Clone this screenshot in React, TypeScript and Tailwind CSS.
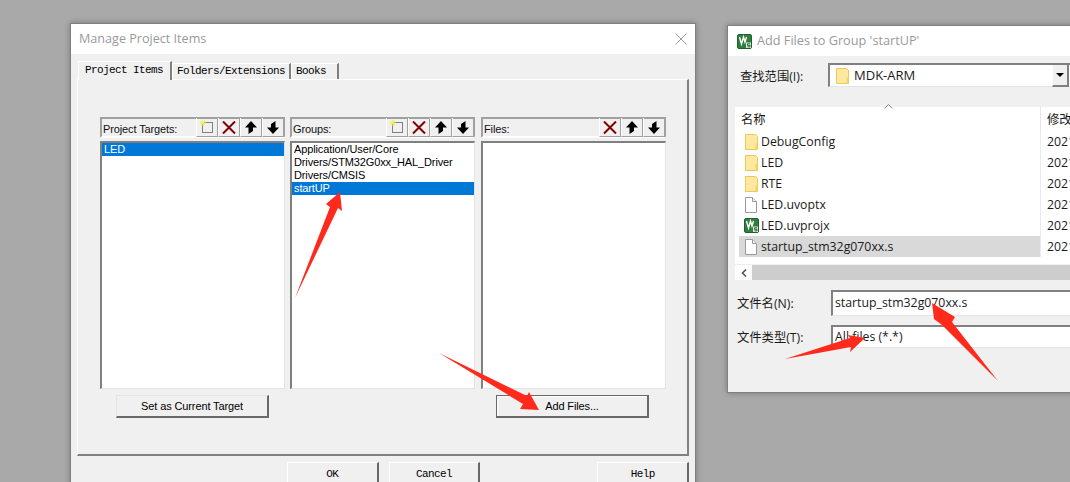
import React from "react";

const sans = "font-['Liberation_Sans',sans-serif] text-[11px] tracking-[-0.12px]";
const ui = "font-['Open_Sans','Noto_Sans_CJK_SC',sans-serif]";
const mono = "font-['Liberation_Mono',monospace] text-[11px] tracking-[-0.6px]";

function NewIcon() {
  return (
    <svg width="14" height="14" viewBox="0 0 14 14">
      <rect x="2.500" y="2.500" width="10" height="10" fill="none" stroke="#111" strokeDasharray="1 1" />
      <path d="M3 0v6M0 3h6M1 1l4 4M5 1L1 5" stroke="#f4f03c" strokeWidth="1" />
    </svg>
  );
}

function DeleteIcon() {
  return (
    <svg width="14" height="13" viewBox="0 0 14 13">
      <path d="M1 .5l12 12M13 .5l-12 12" stroke="#800000" strokeWidth="2" />
    </svg>
  );
}

function UpIcon() {
  return (
    <svg width="12" height="13" viewBox="0 0 12 13">
      <path d="M6 0l6 6.500H8V10L3.500 13V6.500H0z" fill="#000" />
    </svg>
  );
}

function DownIcon() {
  return (
    <svg width="12" height="13" viewBox="0 0 12 13">
      <path d="M6 13L0 6.500h4V3L8.500 0v6.500H12z" fill="#000" />
    </svg>
  );
}

function ToolButton({ children }: { children: React.ReactNode }) {
  return (
    <div className="flex h-[19px] w-[22px] items-center justify-center border-l border-r border-b border-l-white border-r-[#a0a0a0] border-b-[#a0a0a0]">
      {children}
    </div>
  );
}

function ListColumn({
  label,
  items,
  selected,
  showNew,
  button,
  buttonPressed,
  buttonOffset,
}: {
  label: string;
  items: string[];
  selected: number;
  showNew: boolean;
  button?: string;
  buttonPressed?: boolean;
  buttonOffset?: string;
}) {
  return (
    <div className="flex w-[185px] flex-col">
      <div className="flex h-[21px] items-center justify-between border-t-2 border-l-2 border-r border-b-2 border-t-[#a0a0a0] border-l-[#a0a0a0] border-r-[#a0a0a0] border-b-white">
        <span className={`${sans} pl-[1px] pt-[3px] text-[#111]`}>{label}</span>
        <div className="flex">
          {showNew && (
            <ToolButton>
              <NewIcon />
            </ToolButton>
          )}
          <ToolButton>
            <DeleteIcon />
          </ToolButton>
          <ToolButton>
            <UpIcon />
          </ToolButton>
          <ToolButton>
            <DownIcon />
          </ToolButton>
        </div>
      </div>
      <div className="mt-[3px] h-[248px] border-t-2 border-l-2 border-r border-b border-t-[#808080] border-l-[#808080] border-r-[#e4e4e4] border-b-[#e4e4e4] bg-white">
        {items.map((item, i) => (
          <div
            key={item}
            className={`${sans} h-[13px] pl-[2px] leading-[13px] ${
              i === selected ? "bg-[#0078d7] text-white" : "text-black"
            }`}
          >
            {item}
          </div>
        ))}
      </div>
      {button && (
        <div
          className={`${sans} ${buttonOffset} mt-[6px] flex h-[23px] w-[153px] items-center justify-center bg-[#f0f0f0] text-black ${
            buttonPressed
              ? "border border-r-2 border-b-2 border-[#696969] shadow-[inset_1px_1px_0_#fff]"
              : "border-t border-l border-r-2 border-b-2 border-t-[#e4e4e4] border-l-[#e4e4e4] border-r-[#696969] border-b-[#696969]"
          }`}
        >
          {button}
        </div>
      )}
    </div>
  );
}

function Tab({ label, active, className }: { label: string; active?: boolean; className?: string }) {
  return (
    <div
      className={`${mono} flex items-center border-t border-l border-r-2 border-t-white border-l-white border-r-[#808080] bg-[#f0f0f0] text-black ${
        active ? "relative -mb-[1px] h-[19px] pb-[2px] pl-[6px] pr-[7px]" : "h-[16px] px-[4px]"
      } ${className ?? ""}`}
    >
      {label}
    </div>
  );
}

function DialogButton({ label, className }: { label: string; className: string }) {
  return (
    <div
      className={`${mono} flex h-[24px] w-[92px] items-center justify-center border-t border-l border-r-2 border-t-white border-l-white border-r-[#696969] text-black ${className}`}
    >
      {label}
    </div>
  );
}

function FolderIcon() {
  return (
    <svg width="13" height="16" viewBox="0 0 13 16">
      <path d="M.5.5h10l2 2v13H.5z" fill="#ffe9a0" stroke="#eac957" />
      <path d="M10.500 15.500v-6h2v6z" fill="#f6d365" />
    </svg>
  );
}

function FileIcon() {
  return (
    <svg width="12" height="16" viewBox="0 0 12 16">
      <path d="M.5.5h7l4 4v11H.5z" fill="#fff" stroke="#9a9a9a" />
      <path d="M7.500.5v4h4" fill="#eee" stroke="#9a9a9a" />
    </svg>
  );
}

function KeilIcon() {
  return (
    <svg width="15" height="15" viewBox="0 0 15 15">
      <rect x="0.5" y="0.5" width="14" height="14" rx="1.500" fill="#2f7d3f" stroke="#1f5f2e" />
      <path d="M2.500 3l2 7 2-7 1.500 5 1.500-5" fill="none" stroke="#fff" strokeWidth="1.400" />
      <rect x="9" y="8.500" width="5" height="5.500" fill="#d8e8d8" />
      <path d="M13 9.800h-2.500v1.500H13v1.500h-2.500" fill="none" stroke="#1f5f2e" strokeWidth="0.900" />
    </svg>
  );
}

const files = [
  { name: "DebugConfig", icon: <FolderIcon /> },
  { name: "LED", icon: <FolderIcon /> },
  { name: "RTE", icon: <FolderIcon /> },
  { name: "LED.uvoptx", icon: <FileIcon /> },
  { name: "LED.uvprojx", icon: <KeilIcon /> },
  { name: "startup_stm32g070xx.s", icon: <FileIcon />, selected: true },
];

function ManageDialog() {
  return (
    <div className="absolute left-[70px] top-[23px] h-[480px] w-[626px] border border-[#808080] bg-[#f0f0f0] shadow-[0_0_6px_rgba(0,0,0,0.3)]">
      <div className="flex h-[30px] items-center justify-between bg-white pl-[8px] pr-[8px]">
        <span className={`${ui} text-[12.6px] text-[#9a9a9a]`}>Manage Project Items</span>
        <svg width="12" height="12" viewBox="0 0 12 12">
          <path d="M.5.5l11 11M11.500.5l-11 11" stroke="#9a9a9a" />
        </svg>
      </div>
      <div className="px-[6px] pt-[7px]">
        <div className="flex h-[18px] items-end pl-[1px]">
          <Tab label="Project Items" active />
          <Tab label="Folders/Extensions" />
          <Tab label="Books" className="pr-[11px]" />
        </div>
        <div className="h-[377px] w-[612px] border-t border-l border-r-2 border-b-2 border-t-white border-l-white border-r-[#808080] border-b-[#808080] pl-[22px] pt-[37px]">
          <div className="flex gap-[5px]">
            <ListColumn
              label="Project Targets:"
              items={["LED"]}
              selected={0}
              showNew
              button="Set as Current Target"
              buttonOffset="ml-[16px]"
            />
            <ListColumn
              label="Groups:"
              items={["Application/User/Core", "Drivers/STM32G0xx_HAL_Driver", "Drivers/CMSIS", "startUP"]}
              selected={3}
              showNew
            />
            <div className="ml-[1px]">
              <ListColumn
                label="Files:"
                items={[]}
                selected={-1}
                showNew={false}
                button="Add Files..."
                buttonPressed
                buttonOffset="ml-[15px]"
              />
            </div>
          </div>
        </div>
        <div className="mt-[6px] flex pl-[210px]">
          <DialogButton label="OK" className="" />
          <DialogButton label="Cancel" className="ml-[10px]" />
          <DialogButton label="Help" className="ml-[117px]" />
        </div>
      </div>
    </div>
  );
}

function AddFilesDialog() {
  return (
    <div className="absolute left-[727px] top-[25px] h-[368px] w-[360px] border border-[#808080] bg-[#f0f0f0] shadow-[0_0_6px_rgba(0,0,0,0.3)]">
      <div className="flex h-[30px] items-center gap-[5px] bg-white pl-[9px]">
        <KeilIcon />
        <span className={`${ui} text-[12.7px] text-[#9a9a9a]`}>Add Files to Group 'startUP'</span>
      </div>
      <div className={`${ui} text-[12.3px] text-[#1a1a1a]`}>
        <div className="mt-[7px] flex h-[24px] items-center pl-[12px]">
          <span className="w-[88px] pt-[5px]">查找范围(I):</span>
          <div className="flex h-[24px] flex-1 items-center border-t-2 border-l-2 border-b border-t-[#808080] border-l-[#808080] border-b-[#e4e4e4] bg-white pl-[6px]">
            <FolderIcon />
            <span className="ml-[5px] w-[198px] text-[13px]">MDK-ARM</span>
            <div className="flex h-[22px] w-[17px] items-center justify-center border-l border-r-2 border-b-2 border-l-white border-r-[#808080] border-b-[#808080] bg-[#f0f0f0]">
              <div className="h-0 w-0 border-x-[4px] border-t-[4px] border-x-transparent border-t-black" />
            </div>
          </div>
        </div>
        <div className="ml-[7px] mt-[20px] h-[157px] bg-white">
          <div className="flex h-[24px] items-center">
            <span className="relative w-[305px] pl-[6px] pt-[2px]">
              名称
              <svg className="absolute left-[149px] top-[-5px]" width="9" height="5" viewBox="0 0 9 5">
                <path d="M.5 4.500l4-4 4 4" fill="none" stroke="#888" />
              </svg>
            </span>
            <span className="h-full border-l border-[#e5e5e5] pl-[6px] leading-[25px]">修改</span>
          </div>
          {files.map((f) => (
            <div key={f.name} className="flex h-[21px] items-center">
              <div className={`ml-[4px] flex h-full w-[301px] items-center ${f.selected ? "bg-[#d9d9d9]" : ""}`}>
                <div className="flex w-[22px] justify-center pl-[2px]">{f.icon}</div>
                <span className="pt-[2px]">{f.name}</span>
              </div>
              <span className="h-full border-l border-[#e5ecf5] pl-[6px] leading-[22px]">2021</span>
            </div>
          ))}
        </div>
        <div className="ml-[7px] mt-[1px] flex h-[15px]">
          <div className="flex w-[17px] items-center justify-center bg-white">
            <svg width="6" height="8" viewBox="0 0 6 8">
              <path d="M5 .5L1.500 4 5 7.500" fill="none" stroke="#555" strokeWidth="1.600" />
            </svg>
          </div>
          <div className="flex-1 bg-[#cdcdcd]" />
        </div>
        <div className="mt-[10px] flex h-[26px] items-center pl-[9px]">
          <span className="w-[94px] pt-[2px]">文件名(N):</span>
          <div className="flex h-[26px] flex-1 items-center border-t-2 border-l-2 border-b border-t-[#808080] border-l-[#808080] border-b-[#e4e4e4] bg-white pl-[2px]">
            startup_stm32g070xx.s
          </div>
        </div>
        <div className="mt-[9px] flex h-[23px] items-center pl-[9px]">
          <span className="w-[94px] pt-[4px]">文件类型(T):</span>
          <div className="flex h-[23px] flex-1 items-center border-t-2 border-l-2 border-b border-t-[#808080] border-l-[#808080] border-b-[#e4e4e4] bg-white pl-[2px]">
            All files (*.*)
          </div>
        </div>
      </div>
    </div>
  );
}

function Arrows() {
  return (
    <svg className="absolute left-0 top-0" width="1070" height="482" viewBox="0 0 1070 482">
      <g fill="#ff2a1c">
        <path d="M295 298L330 207 326 204 340 192 342 211 338 208z" />
        <path d="M439 353L527 396 529 392 539 410 520 409 523 404z" />
        <path d="M785 359L850 338 848 335 865 338 850 352 851 347z" />
        <path d="M998 381L942 325 934 319 932 303 955 317 952 322z" />
      </g>
    </svg>
  );
}

export default function App() {
  return (
    <div className="relative h-[482px] w-[1070px] overflow-hidden bg-[#a9a9a9]">
      <ManageDialog />
      <AddFilesDialog />
      <Arrows />
    </div>
  );
}
